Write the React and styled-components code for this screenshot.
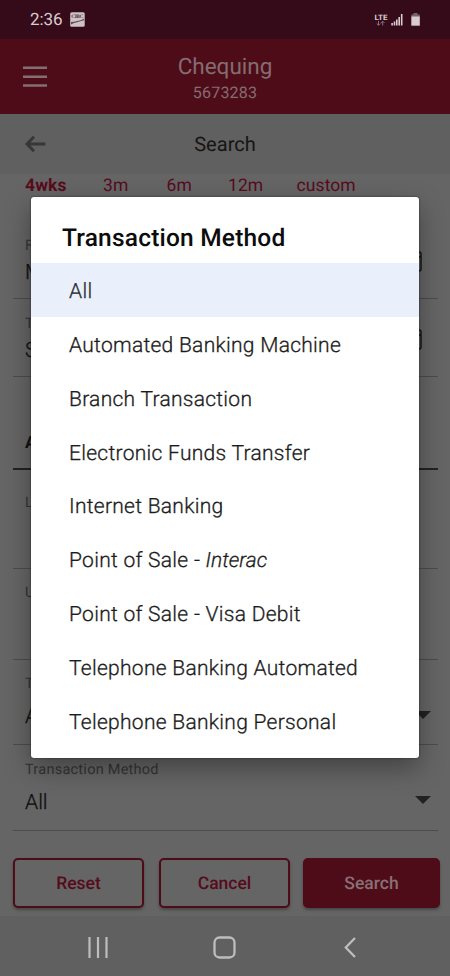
import React from 'react';
import styled, { createGlobalStyle } from 'styled-components';

const GlobalStyle = createGlobalStyle`
  * {
    box-sizing: border-box;
  }

  body {
    margin: 0;
    background: #656565;
    font-family: Roboto, 'Liberation Sans', sans-serif;
    text-rendering: geometricPrecision;
  }

  button {
    font-family: inherit;
    text-rendering: inherit;
  }
`;

const Screen = styled.div`
  position: relative;
  display: flex;
  flex-direction: column;
  width: 450px;
  height: 976px;
  overflow: hidden;
  background: #656565;
`;

const StatusBar = styled.div`
  display: flex;
  align-items: center;
  height: 39px;
  padding: 0 28px 0 30px;
  background: #350b1a;
  color: #d9ccd1;
`;

const Clock = styled.span`
  width: 40px;
  font-size: 17px;
  line-height: 39px;
  letter-spacing: -.1px;
  padding-top: 2px;
`;

const StatusIcons = styled.div`
  display: flex;
  align-items: center;
  margin-left: auto;
`;

const Header = styled.header`
  display: grid;
  grid-template-columns: 92px 1fr 92px;
  align-items: center;
  height: 75px;
  background: #4e0c18;
`;

const MenuButton = styled.button`
  display: flex;
  padding: 0 0 0 23px;
  border: 0;
  background: transparent;
`;

const Account = styled.div`
  display: flex;
  flex-direction: column;
  align-items: center;
  padding-top: 3px;
  color: #846c71;
`;

const AccountName = styled.h1`
  margin: 0;
  font-size: 22.5px;
  font-weight: 400;
  line-height: 28px;
`;

const AccountNumber = styled.span`
  font-size: 16px;
  line-height: 23px;
  letter-spacing: .2px;
`;

const SubHeader = styled.div`
  display: grid;
  grid-template-columns: 92px 1fr 92px;
  align-items: center;
  height: 60px;
  background: #606060;

  svg {
    margin-left: 24px;
  }

  h2 {
    margin: 0;
    text-align: center;
    font-size: 20px;
    font-weight: 400;
    letter-spacing: .05px;
    color: #151515;
  }
`;

const Periods = styled.div`
  display: flex;
  height: 48px;
  padding-left: 25px;
`;

const Period = styled.span`
  width: ${props => props.$width}px;
  font-size: 17.5px;
  line-height: 24px;
  letter-spacing: .1px;
  font-weight: ${props => (props.$active ? 700 : 400)};
  color: #570c1e;
`;

// one form row, closed by its own line
const Field = styled.div`
  position: relative;
  height: ${props => props.$height}px;
  margin: 0 12.5px;
  padding: ${props => props.$top}px 0 0 12.5px;
  border-bottom: ${props => (props.$strong ? '2px solid #222' : '1px solid #4c4c4c')};
`;

const Label = styled.div`
  font-size: 14.5px;
  line-height: 18px;
  letter-spacing: .25px;
  color: #343434;
`;

const Value = styled.div`
  margin-top: ${props => props.$gap || 0}px;
  font-size: ${props => (props.$bold ? 17 : 21)}px;
  line-height: 26px;
  font-weight: ${props => (props.$bold ? 700 : 300)};
  -webkit-text-stroke: ${props => (props.$bold ? 0 : '.3px')} #111;
  color: #111;
`;

const FieldIcon = styled.span`
  position: absolute;
  display: flex;
  right: ${props => props.$right}px;
  bottom: ${props => props.$bottom}px;
`;

const Actions = styled.div`
  display: grid;
  grid-template-columns: 146px 144px 137px;
  padding: 27px 0 0 13px;
  height: 85px;
`;

const Action = styled.button`
  width: ${props => (props.$filled ? 137 : 131)}px;
  height: 50px;
  padding: 2px 0 0;
  border: 2px solid #4e0c18;
  border-radius: 5px;
  background: ${props => (props.$filled ? '#4e0c18' : '#656565')};
  color: ${props => (props.$filled ? '#8a7075' : '#550b1c')};
  font-size: 17.5px;
  font-weight: 500;
  box-shadow: 0 2px 3px rgba(0, 0, 0, .3);
`;

const NavBar = styled.nav`
  display: grid;
  grid-template-columns: 196px 56px 196px;
  place-items: center;
  flex: 1;
  padding-top: 3px;
  background: #606060;
`;

const Dialog = styled.div`
  position: absolute;
  top: 197px;
  left: 31px;
  width: 388px;
  height: 561px;
  border-radius: 3px;
  background: #fff;
  box-shadow: 0 10px 26px rgba(0, 0, 0, .35), 0 0 2px rgba(0, 0, 0, .6);
`;

const DialogTitle = styled.h3`
  margin: 0;
  height: 66px;
  padding: 25px 0 0 31px;
  font-size: 24.5px;
  font-weight: 500;
  line-height: 32px;
  letter-spacing: .2px;
  color: #0c0c0c;
`;

const Option = styled.div`
  height: 53.85px;
  padding: 3px 0 0 38px;
  line-height: 53px;
  font-size: 21px;
  font-weight: 300;
  -webkit-text-stroke: .3px currentColor;
  letter-spacing: .28px;
  color: ${props => (props.$selected ? '#2b3038' : '#1c1c1c')};
  background: ${props => (props.$selected ? '#e9f0fb' : 'transparent')};

  i {
    letter-spacing: 0;
  }
`;

const periods = [
  { name: '4wks', width: 78, active: true },
  { name: '3m', width: 63.5 },
  { name: '6m', width: 61.5 },
  { name: '12m', width: 68.5 },
  { name: 'custom', width: 70 },
];

const options = [
  'All',
  'Automated Banking Machine',
  'Branch Transaction',
  'Electronic Funds Transfer',
  'Internet Banking',
  <>Point of Sale - <i>Interac</i></>,
  'Point of Sale - Visa Debit',
  'Telephone Banking Automated',
  'Telephone Banking Personal',
];

const BankIcon = () => (
  <svg width="15" height="15" viewBox="0 0 15 15">
    <rect width="14.5" height="14.5" x=".2" y=".2" rx="1.5" fill="#cfc1c6" />
    <text x="1.3" y="6.4" fontSize="5.4" fontFamily="Liberation Serif, serif" fontWeight="700" textLength="12" fill="#4a2f3b">CIBC</text>
    <path d="M1 12.5V10c4-.2 8.500-1 13-3.200v1.400C9 10 5 10 1 12.500z" fill="#624b56" />
  </svg>
);

const Network = () => (
  <svg width="50" height="16" viewBox="0 0 50 16">
    <text x="2.5" y="7.500" fontSize="7.500" fontWeight="700" textLength="13" lengthAdjust="spacingAndGlyphs" fill="#d9ccd1">LTE</text>
    <path d="M6.500 9v4M4.700 11.500l1.800 1.800 1.800-1.800M10.700 13.500v-4M8.900 11l1.800-1.800 1.800 1.800" fill="none" stroke="#86707b" strokeWidth="1" />
    <path d="M19.300 11h1.600v2.500h-1.600zM21.700 9.500h1.600v4h-1.600zM24 7.500h1.600v6H24zM26.400 5H28v8.500h-1.600zM28.900 2h1.600v11.500h-1.600z" fill="#d9ccd1" />
    <path d="M41.500 1h4v1.500h2.300V5h-8.500V2.500h2.200z" fill="#77636d" />
    <path d="M39.300 4.500h8.500v9.200h-8.500z" fill="#d9ccd1" />
  </svg>
);

const Menu = () => (
  <svg width="24" height="22" viewBox="0 0 24 22">
    <path d="M0 1.700h24M0 10.700h24M0 19.500h24" stroke="#856e73" strokeWidth="2.400" />
  </svg>
);

const Back = () => (
  <svg width="22" height="18" viewBox="0 0 22 18">
    <path d="M21.500 9H3.500M10 1.800L3 9l7 7.200" fill="none" stroke="#373737" strokeWidth="3" />
  </svg>
);

const Calendar = () => (
  <svg width="22" height="23" viewBox="0 0 22 23">
    <rect x="1" y="3" width="20" height="19" rx="2" fill="none" stroke="#171717" strokeWidth="1.500" />
    <path d="M1 8h20M6 0v5M16 0v5" stroke="#171717" strokeWidth="1.500" />
  </svg>
);

const Caret = () => (
  <svg width="16" height="8" viewBox="0 0 16 8">
    <path d="M0 0h16L8 8z" fill="#222" />
  </svg>
);

const Recents = () => (
  <svg width="20" height="21" viewBox="0 0 20 21">
    <path d="M1.500 0v21M10 0v21M18.500 0v21" stroke="#bdbdbd" strokeWidth="2.200" />
  </svg>
);

const Home = () => (
  <svg width="23" height="23" viewBox="0 0 23 23">
    <rect x="1.500" y="1.500" width="20" height="20" rx="5" fill="none" stroke="#bdbdbd" strokeWidth="2.300" />
  </svg>
);

const NavBack = () => (
  <svg width="12" height="21" viewBox="0 0 12 21">
    <path d="M11 1L1.800 10.500 11 20" fill="none" stroke="#bdbdbd" strokeWidth="2.300" />
  </svg>
);

const App = () => {
  return (
    <Screen>
      <GlobalStyle />

      <StatusBar>
        <Clock>2:36</Clock>
        <BankIcon />
        <StatusIcons><Network /></StatusIcons>
      </StatusBar>

      <Header>
        <MenuButton aria-label="Menu"><Menu /></MenuButton>
        <Account>
          <AccountName>Chequing</AccountName>
          <AccountNumber>5673283</AccountNumber>
        </Account>
      </Header>

      <SubHeader>
        <Back />
        <h2>Search</h2>
      </SubHeader>

      <Periods>
        {periods.map(p => (
          <Period key={p.name} $width={p.width} $active={p.active}>{p.name}</Period>
        ))}
      </Periods>

      <Field $height={77} $top={15}>
        <Label>From</Label>
        <Value $gap={5}>M</Value>
        <FieldIcon $right={16} $bottom={26}><Calendar /></FieldIcon>
      </Field>
      <Field $height={78} $top={16}>
        <Label>To</Label>
        <Value $gap={5}>S</Value>
        <FieldIcon $right={16} $bottom={26}><Calendar /></FieldIcon>
      </Field>
      <Field $height={93} $top={53} $strong>
        <Value $bold>A</Value>
      </Field>
      <Field $height={99} $top={24}>
        <Label>Lower</Label>
      </Field>
      <Field $height={91} $top={15}>
        <Label>Upper</Label>
      </Field>
      <Field $height={85} $top={15}>
        <Label>Type</Label>
        <Value $gap={11}>A</Value>
        <FieldIcon $right={7} $bottom={25}><Caret /></FieldIcon>
      </Field>
      <Field $height={86} $top={16}>
        <Label>Transaction Method</Label>
        <Value $gap={11}>All</Value>
        <FieldIcon $right={7} $bottom={26}><Caret /></FieldIcon>
      </Field>

      <Actions>
        <Action>Reset</Action>
        <Action>Cancel</Action>
        <Action $filled>Search</Action>
      </Actions>

      <NavBar>
        <Recents />
        <Home />
        <NavBack />
      </NavBar>

      <Dialog role="dialog">
        <DialogTitle>Transaction Method</DialogTitle>
        {options.map((option, i) => (
          <Option key={i} $selected={i === 0}>{option}</Option>
        ))}
      </Dialog>
    </Screen>
  )
}

export default App;
